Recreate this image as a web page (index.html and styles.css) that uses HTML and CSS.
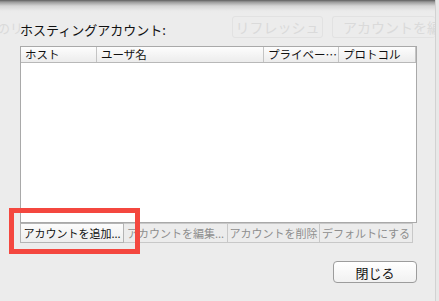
FILE: index.html
```html
<!DOCTYPE html>
<html lang="ja">
<head>
  <meta charset="UTF-8">
  <title>ホスティングアカウント</title>
  <link rel="stylesheet" href="styles.css">
</head>
<body>
  <div class="ghost ghost-text">のリ</div>
  <div class="ghost ghost-btn g1">リフレッシュ</div>
  <div class="ghost ghost-btn g2">アカウントを編集</div>
  <div class="edge"></div>

  <div class="sheet">
    <div class="title">ホスティングアカウント:</div>
    <div class="table">
      <div class="head">
        <div class="col c1">ホスト</div>
        <div class="col c2">ユーザ名</div>
        <div class="col c3">プライベー…</div>
        <div class="col c4">プロトコル</div>
      </div>
    </div>
    <div class="actions">
      <button class="btn b1">アカウントを追加...</button>
      <button class="btn b2 off">アカウントを編集...</button>
      <button class="btn b3 off">アカウントを削除</button>
      <button class="btn b4 off">デフォルトにする</button>
    </div>
    <div class="footer">
      <button class="close">閉じる</button>
    </div>
  </div>

  <div class="mark"></div>
</body>
</html>
```

FILE: styles.css
```css
body {
  margin: 0;
  width: 439px;
  height: 301px;
  overflow: hidden;
  position: relative;
  font-family: "Noto Sans CJK JP", "Liberation Sans", sans-serif;
  background: linear-gradient(#5e5e5e 0, #9a9a9a 2px, #d6d6d6 6px, #ebebeb 11px, #ececec 14px);
  color: #111;
}
.ghost {
  position: absolute;
  color: #dadada;
  font-size: 13px;
}
.ghost-text {
  left: -3px;
  top: 18px;
}
.ghost-btn {
  top: 16px;
  height: 20px;
  line-height: 20px;
  border: 1px solid #e2e2e2;
  border-radius: 3px;
  text-align: center;
  font-size: 14px;
  white-space: nowrap;
  overflow: hidden;
}
.g1 {
  left: 232px;
  width: 89px;
}
.g2 {
  left: 332px;
  width: 92px;
  text-align: left;
  padding-left: 10px;
  border-right: none;
}
.edge {
  position: absolute;
  right: 0;
  top: 0;
  width: 3px;
  height: 301px;
  border-left: 1px solid #d2d2d2;
  background: #e8e8e8;
}
.sheet {
  position: relative;
  padding: 22px 0 0 20px;
}
.title {
  font-size: 13px;
  line-height: 16px;
  height: 16px;
  margin-bottom: 8px;
}
.table {
  width: 395px;
  height: 175px;
  border: 1px solid #a9a9a9;
  background: #fff;
}
.head {
  display: flex;
  height: 15px;
  border-bottom: 1px solid #b8b8b8;
  background: linear-gradient(#fdfdfd, #ececec);
  font-size: 11.5px;
  line-height: 15px;
}
.col {
  padding-left: 4px;
  border-right: 1px solid #c4c4c4;
  white-space: nowrap;
  overflow: hidden;
}
.c1 { width: 71px; }
.c2 { width: 162px; }
.c3 { width: 70px; }
.c4 { width: 72px; }
.actions {
  display: flex;
}
.btn {
  height: 20px;
  margin: 0;
  padding: 0;
  border: 1px solid #b4b4b4;
  border-left: none;
  background: linear-gradient(#f6f6f6, #e9e9e9);
  font-family: inherit;
  font-size: 11px;
  line-height: 18px;
  color: #111;
  white-space: nowrap;
  overflow: hidden;
}
.b1 {
  width: 104px;
  border-left: 1px solid #b4b4b4;
  background: linear-gradient(#fcfcfc, #eeeeee);
}
.b2 { width: 104px; }
.b3 { width: 92px; }
.b4 { width: 93px; }
.off {
  color: #8e8e8e;
  border-color: #c8c8c8;
  background: #ececec;
}
.footer {
  display: flex;
  justify-content: flex-end;
  width: 397px;
  margin-top: 18px;
}
.close {
  width: 84px;
  height: 22px;
  border: 1px solid #9c9c9c;
  border-radius: 4px;
  background: linear-gradient(#ffffff, #f1f1f1);
  font-family: inherit;
  font-size: 13px;
  color: #111;
  padding: 0;
}
.mark {
  position: absolute;
  left: 9px;
  top: 208px;
  width: 121px;
  height: 36px;
  border: 5px solid #f4473f;
}
```
